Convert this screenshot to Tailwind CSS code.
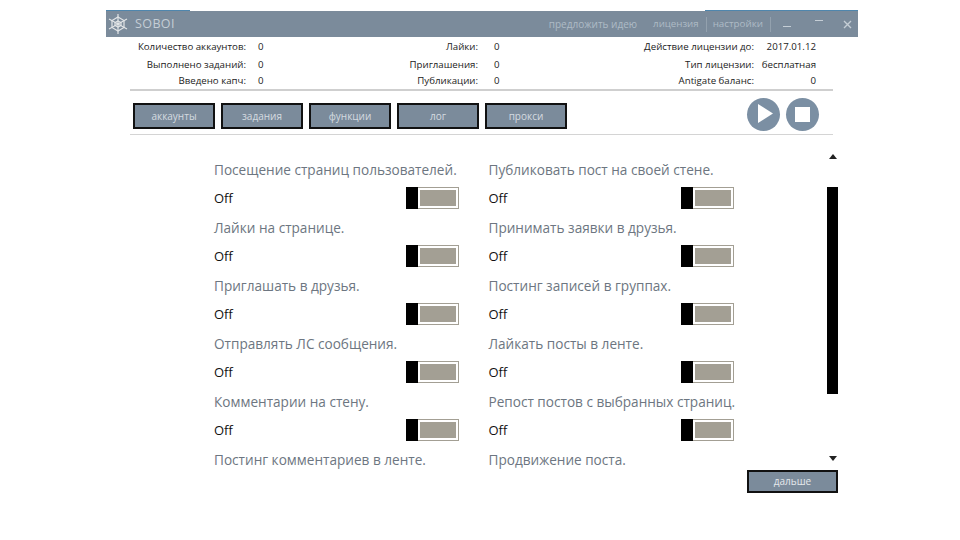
<!DOCTYPE html>
<html lang="en">
<head>
  <meta charset="UTF-8">
  <title>Soboi</title>
  <script src="https://cdn.jsdelivr.net/npm/@tailwindcss/browser@4"></script>
</head>
<body class="bg-white">
  <div class="w-[960px] h-[540px] overflow-hidden pt-[10px] pl-[106px] font-['Open_Sans',sans-serif]">
    <div class="w-[752px]">
      <!-- Title bar -->
      <div class="flex justify-between h-px">
        <div class="w-[84px] bg-[#4f86ad]"></div>
        <div class="w-[153px] bg-[#4f86ad]"></div>
      </div>
      <header class="h-[26px] bg-[#7b8b9b] flex items-center text-[#aebbc6]">
        <svg class="ml-[1px] w-[22px] h-[22px]" viewBox="0 0 22 22" fill="none" stroke="#e2e5e7" stroke-width="1.2">
          <path d="M11 1V21M2 6L20 16M2 16L20 6"/>
          <path d="M11 4L17 7.500V14.500L11 18L5 14.500V7.500Z"/>
          <path d="M11 8L14 9.500V12.500L11 14L8 12.500V9.500Z"/>
        </svg>
        <span class="ml-[6px] text-[12.500px] tracking-[.4px] text-[#c5ced6]">SOBOI</span>
        <div class="ml-auto flex items-center text-[10px]">
          <span>предложить идею</span>
          <span class="ml-[16px] text-[9.700px]">лицензия</span>
          <span class="ml-[7px] h-[15px] border-l border-[#93a1ae]"></span>
          <span class="ml-[6px] text-[9.800px]">настройки</span>
          <span class="ml-[7px] h-[15px] border-l border-[#93a1ae]"></span>
          <span class="ml-[12px] mt-[5px] w-[8px] h-px bg-[#c5ced6]"></span>
          <span class="ml-[24px] -mt-[8px] w-[8px] h-px bg-[#c5ced6]"></span>
          <svg class="ml-[20px] mr-[6px] w-[9px] h-[9px]" viewBox="0 0 9 9" stroke="#c5ced6" stroke-width="1.4"><path d="M1 1L8 8M8 1L1 8"/></svg>
        </div>
      </header>

      <!-- Stats -->
      <div class="ml-[24px] w-[703px] h-[54px] border-b-2 border-[#cfcfcf] pt-[1px] text-[9.700px] text-[#222] grid grid-cols-[116px_12px_20px_200px_16px_20px_240px_62px] grid-rows-[19px_17px_15px] items-center">
        <span class="text-right">Количество аккаунтов:</span><span></span><span>0</span>
        <span class="text-right">Лайки:</span><span></span><span>0</span>
        <span class="text-right">Действие лицензии до:</span><span class="text-right">2017.01.12</span>
        <span class="text-right">Выполнено заданий:</span><span></span><span>0</span>
        <span class="text-right">Приглашения:</span><span></span><span>0</span>
        <span class="text-right">Тип лицензии:</span><span class="text-right">бесплатная</span>
        <span class="text-right">Введено капч:</span><span></span><span>0</span>
        <span class="text-right">Публикации:</span><span></span><span>0</span>
        <span class="text-right">Antigate баланс:</span><span class="text-right">0</span>
      </div>

      <!-- Tabs -->
      <div class="ml-[24px] w-[703px] h-[44px] border-b border-[#d4d4d4] flex items-start pt-[12px] pl-[3px] gap-[6px]">
        <button class="w-[82px] h-[26px] bg-[#7b8b9b] border-2 border-[#111] text-[10px] text-[#d5dbe0]">аккаунты</button>
        <button class="w-[82px] h-[26px] bg-[#7b8b9b] border-2 border-[#111] text-[10px] text-[#d5dbe0]">задания</button>
        <button class="w-[82px] h-[26px] bg-[#7b8b9b] border-2 border-[#111] text-[10px] text-[#d5dbe0]">функции</button>
        <button class="w-[82px] h-[26px] bg-[#7b8b9b] border-2 border-[#111] text-[10px] text-[#d5dbe0]">лог</button>
        <button class="w-[82px] h-[26px] bg-[#7b8b9b] border-2 border-[#111] text-[10px] text-[#d5dbe0]">прокси</button>
        <div class="ml-auto mr-[14px] -mt-[5px] flex gap-[6px]">
          <div class="w-[33px] h-[33px] rounded-full bg-[#7b8fa3] flex items-center justify-center">
            <svg class="w-[33px] h-[33px]" viewBox="0 0 33 33"><path d="M11 6L26 15.500L11 25Z" fill="#fff"/></svg>
          </div>
          <div class="w-[33px] h-[33px] rounded-full bg-[#7b8fa3] flex items-center justify-center">
            <div class="w-[15px] h-[15px] bg-white"></div>
          </div>
        </div>
      </div>

      <!-- Options and scrollbar -->
      <div class="flex h-[335px]">
        <div class="ml-[108px] pt-[25px] w-[549px] grid grid-cols-2 auto-rows-[58px] text-[13.600px] text-[#6d7681]">
          <div>
            <p class="h-[20px] leading-[20px]">Посещение страниц пользователей.</p>
            <div class="mt-[7px] w-[245px] flex items-center justify-between"><span class="pt-[2px] text-[13px] text-[#111]">Off</span><span class="w-[53px] h-[22px] flex bg-white border border-[#a39f94]"><span class="-my-px -ml-px w-[12px] h-[22px] bg-black"></span><span class="m-[2px] flex-1 bg-[#a39f94]"></span></span></div>
          </div>
          <div>
            <p class="h-[20px] leading-[20px]">Публиковать пост на своей стене.</p>
            <div class="mt-[7px] w-[245px] flex items-center justify-between"><span class="pt-[2px] text-[13px] text-[#111]">Off</span><span class="w-[53px] h-[22px] flex bg-white border border-[#a39f94]"><span class="-my-px -ml-px w-[12px] h-[22px] bg-black"></span><span class="m-[2px] flex-1 bg-[#a39f94]"></span></span></div>
          </div>
          <div>
            <p class="h-[20px] leading-[20px]">Лайки на странице.</p>
            <div class="mt-[7px] w-[245px] flex items-center justify-between"><span class="pt-[2px] text-[13px] text-[#111]">Off</span><span class="w-[53px] h-[22px] flex bg-white border border-[#a39f94]"><span class="-my-px -ml-px w-[12px] h-[22px] bg-black"></span><span class="m-[2px] flex-1 bg-[#a39f94]"></span></span></div>
          </div>
          <div>
            <p class="h-[20px] leading-[20px]">Принимать заявки в друзья.</p>
            <div class="mt-[7px] w-[245px] flex items-center justify-between"><span class="pt-[2px] text-[13px] text-[#111]">Off</span><span class="w-[53px] h-[22px] flex bg-white border border-[#a39f94]"><span class="-my-px -ml-px w-[12px] h-[22px] bg-black"></span><span class="m-[2px] flex-1 bg-[#a39f94]"></span></span></div>
          </div>
          <div>
            <p class="h-[20px] leading-[20px]">Приглашать в друзья.</p>
            <div class="mt-[7px] w-[245px] flex items-center justify-between"><span class="pt-[2px] text-[13px] text-[#111]">Off</span><span class="w-[53px] h-[22px] flex bg-white border border-[#a39f94]"><span class="-my-px -ml-px w-[12px] h-[22px] bg-black"></span><span class="m-[2px] flex-1 bg-[#a39f94]"></span></span></div>
          </div>
          <div>
            <p class="h-[20px] leading-[20px]">Постинг записей в группах.</p>
            <div class="mt-[7px] w-[245px] flex items-center justify-between"><span class="pt-[2px] text-[13px] text-[#111]">Off</span><span class="w-[53px] h-[22px] flex bg-white border border-[#a39f94]"><span class="-my-px -ml-px w-[12px] h-[22px] bg-black"></span><span class="m-[2px] flex-1 bg-[#a39f94]"></span></span></div>
          </div>
          <div>
            <p class="h-[20px] leading-[20px]">Отправлять ЛС сообщения.</p>
            <div class="mt-[7px] w-[245px] flex items-center justify-between"><span class="pt-[2px] text-[13px] text-[#111]">Off</span><span class="w-[53px] h-[22px] flex bg-white border border-[#a39f94]"><span class="-my-px -ml-px w-[12px] h-[22px] bg-black"></span><span class="m-[2px] flex-1 bg-[#a39f94]"></span></span></div>
          </div>
          <div>
            <p class="h-[20px] leading-[20px]">Лайкать посты в ленте.</p>
            <div class="mt-[7px] w-[245px] flex items-center justify-between"><span class="pt-[2px] text-[13px] text-[#111]">Off</span><span class="w-[53px] h-[22px] flex bg-white border border-[#a39f94]"><span class="-my-px -ml-px w-[12px] h-[22px] bg-black"></span><span class="m-[2px] flex-1 bg-[#a39f94]"></span></span></div>
          </div>
          <div>
            <p class="h-[20px] leading-[20px]">Комментарии на стену.</p>
            <div class="mt-[7px] w-[245px] flex items-center justify-between"><span class="pt-[2px] text-[13px] text-[#111]">Off</span><span class="w-[53px] h-[22px] flex bg-white border border-[#a39f94]"><span class="-my-px -ml-px w-[12px] h-[22px] bg-black"></span><span class="m-[2px] flex-1 bg-[#a39f94]"></span></span></div>
          </div>
          <div>
            <p class="h-[20px] leading-[20px] whitespace-nowrap">Репост постов с выбранных страниц.</p>
            <div class="mt-[7px] w-[245px] flex items-center justify-between"><span class="pt-[2px] text-[13px] text-[#111]">Off</span><span class="w-[53px] h-[22px] flex bg-white border border-[#a39f94]"><span class="-my-px -ml-px w-[12px] h-[22px] bg-black"></span><span class="m-[2px] flex-1 bg-[#a39f94]"></span></span></div>
          </div>
          <div>
            <p class="h-[20px] leading-[20px]">Постинг комментариев в ленте.</p>
          </div>
          <div>
            <p class="h-[20px] leading-[20px]">Продвижение поста.</p>
          </div>
        </div>

        <div class="ml-[64px] w-[11px] flex flex-col items-center">
          <div class="mt-[19px] w-0 h-0 border-x-[4px] border-x-transparent border-b-[5px] border-b-[#222]"></div>
          <div class="mt-[28px] w-[11px] h-[207px] bg-black"></div>
          <div class="mt-[62px] w-0 h-0 border-x-[4px] border-x-transparent border-t-[5px] border-t-[#222]"></div>
        </div>
      </div>

      <div class="ml-[641px] w-[91px] h-[23px] bg-[#7b8b9b] border-2 border-[#111] text-[10px] text-[#e5e9ec] flex items-center justify-center">дальше</div>
    </div>
  </div>
</body>
</html>
